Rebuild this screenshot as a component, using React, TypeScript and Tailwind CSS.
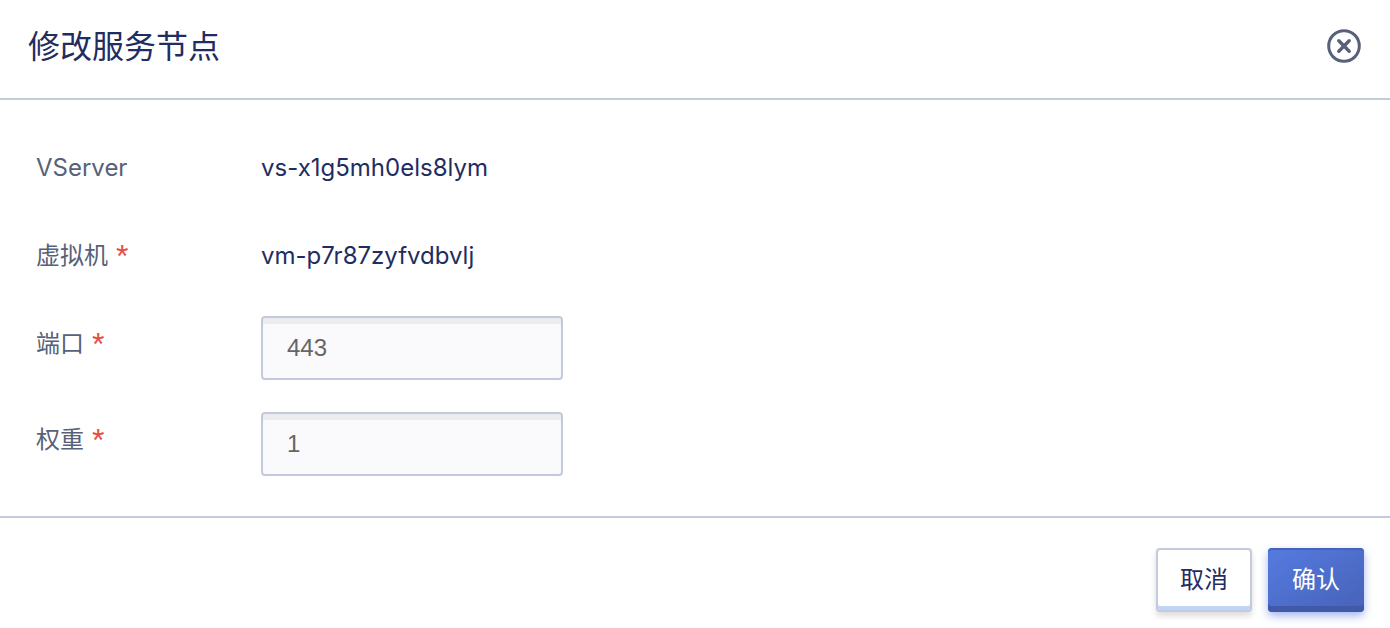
import { useState } from 'react';
import type { ReactNode } from 'react';

function Label({ htmlFor, required, children }: { htmlFor?: string; required?: boolean; children: ReactNode }) {
  const content = (
    <>
      {children}
      {required && (
        <span className="ml-2 font-['Liberation_Sans',sans-serif] text-[32px]/[36px] text-[#e54d3a]">*</span>
      )}
    </>
  );
  const className = 'flex h-14 w-[225px] shrink-0 items-center text-[#576178]';
  return htmlFor ? (
    <label htmlFor={htmlFor} className={className}>{content}</label>
  ) : (
    <span className={className}>{content}</span>
  );
}

function TextRow({ label, required, value }: { label: string; required?: boolean; value: string }) {
  return (
    <div className="flex items-start">
      <Label required={required}>{label}</Label>
      <span className="flex h-14 items-center text-[#1f2d61]">{value}</span>
    </div>
  );
}

function InputRow({ id, label, initial }: { id: string; label: string; initial: string }) {
  const [value, setValue] = useState(initial);
  return (
    <div className="flex items-start">
      <Label htmlFor={id} required>{label}</Label>
      <input
        id={id}
        type="text"
        required
        value={value}
        onChange={(e) => setValue(e.target.value)}
        className="h-16 w-[302px] rounded border-2 border-[#c3cadb] bg-[#fafafc] px-6 font-['Liberation_Sans',sans-serif] text-[#666666] shadow-[inset_0_6px_0_#ececee] outline-none"
      />
    </div>
  );
}

export default function App() {
  return (
    <section
      role="dialog"
      aria-labelledby="dialog-title"
      className="bg-white font-[Inter,'Noto_Sans_CJK_SC',sans-serif] text-2xl"
    >
      <header className="flex items-start justify-between border-b-2 border-[#c3cadb] pt-5 pr-6 pb-6 pl-7">
        <h1 id="dialog-title" className="text-[32px]/[54px] text-[#1f2d61]">修改服务节点</h1>
        <button type="button" aria-label="关闭" className="mt-1 flex size-11 items-center justify-center text-[#576178]">
          <svg viewBox="0 0 34 34" className="size-[34px]" fill="none" stroke="currentColor" aria-hidden="true">
            <circle cx="17" cy="17" r="15.3" strokeWidth="3" />
            <path d="M11.8 11.8l10.4 10.4M22.2 11.8L11.8 22.2" strokeWidth="3.4" strokeLinecap="round" />
          </svg>
        </button>
      </header>

      <form id="node-form" className="flex flex-col gap-8 px-9 py-10" onSubmit={(e) => e.preventDefault()}>
        <TextRow label="VServer" value="vs-x1g5mh0els8lym" />
        <TextRow label="虚拟机" required value="vm-p7r87zyfvdbvlj" />
        <InputRow id="port" label="端口" initial="443" />
        <InputRow id="weight" label="权重" initial="1" />
      </form>

      <footer className="flex justify-end gap-4 border-t-2 border-[#c3cadb] px-[26px] pt-[30px] pb-4">
        <button
          type="button"
          className="h-16 w-24 rounded border-2 border-[#c3cadb] bg-white text-[#1f2d61] shadow-[inset_0_-4px_0_#c2d3f8,0_4px_6px_rgba(0,0,0,0.14)]"
        >
          取消
        </button>
        <button
          type="submit"
          form="node-form"
          className="h-16 w-24 rounded bg-linear-to-br from-[#557be0] to-[#4762b8] text-white shadow-[inset_0_2px_0_#4763b8,inset_0_-6px_0_#415aa8,0_4px_8px_rgba(75,110,225,0.5)]"
        >
          确认
        </button>
      </footer>
    </section>
  );
}
